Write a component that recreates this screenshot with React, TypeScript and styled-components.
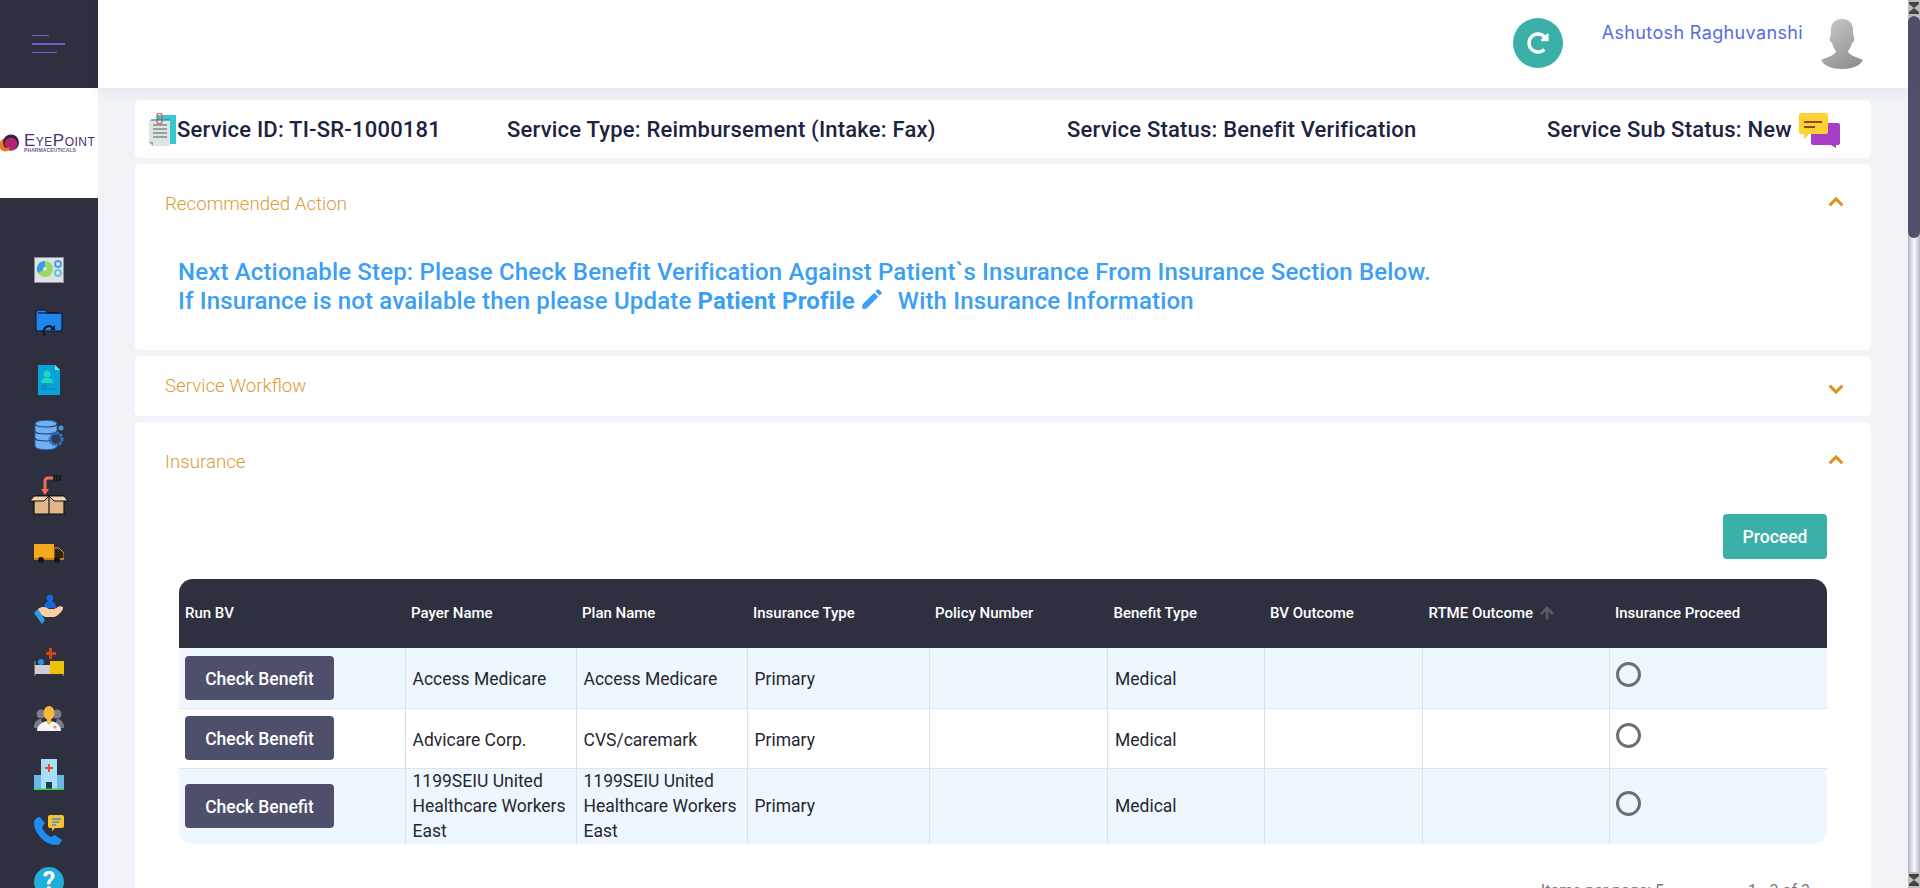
import React from "react";
import styled, { createGlobalStyle } from "styled-components";
import { FaRedoAlt } from "react-icons/fa";

const GlobalStyle = createGlobalStyle`
  html, body {
    margin: 0;
    height: 100%;
    overflow: hidden;
    font-family: Roboto, "Liberation Sans", sans-serif;
    background: #f1f3f9;
  }
`;

const Shell = styled.div`
  display: flex;
  height: 100vh;
  overflow: hidden;
`;

const Sidebar = styled.aside`
  width: 98px;
  flex: none;
  display: flex;
  flex-direction: column;
  overflow: hidden;
  background: #2e2f3f;
`;

const MenuToggle = styled.div`
  height: 88px;
  flex: none;
  display: flex;
  flex-direction: column;
  justify-content: center;
  gap: 7px;
  padding: 0 33px 0 32px;
`;

const MenuLine = styled.span<{ $width: number; $thick?: boolean }>`
  display: block;
  width: ${(p) => p.$width}px;
  height: ${(p) => (p.$thick ? 2 : 1)}px;
  background: #6c61cf;
`;

const LogoBox = styled.div`
  height: 110px;
  flex: none;
  background: #fff;
  display: flex;
  align-items: center;
  gap: 5px;
`;

const LogoText = styled.div`
  display: flex;
  flex-direction: column;
  color: #4b2f72;
  font-family: "Liberation Sans", sans-serif;
`;

const LogoName = styled.span`
  font-size: 17px;
  line-height: 13px;
  font-variant: small-caps;
  letter-spacing: 0.5px;
`;

const LogoSub = styled.span`
  font-size: 5px;
  line-height: 6px;
  font-weight: 700;
  letter-spacing: 0.1px;
  color: #6f5a92;
`;

const NavList = styled.nav`
  display: flex;
  flex-direction: column;
  padding-top: 44px;
`;

const NavItem = styled.div`
  height: 56px;
  flex: none;
  display: flex;
  align-items: center;
  justify-content: center;
`;

const HelpBadge = styled.span`
  width: 30px;
  height: 30px;
  margin-top: -9px;
  border-radius: 50%;
  background: #21aed8;
  color: #fff;
  font-size: 25px;
  font-weight: 700;
  line-height: 30px;
  text-align: center;
  flex: none;
`;

const Main = styled.main`
  flex: 1;
  min-width: 0;
  display: flex;
  flex-direction: column;
`;

const TopBar = styled.header`
  height: 88px;
  flex: none;
  background: #fff;
  display: flex;
  align-items: flex-start;
  justify-content: flex-end;
  box-shadow: 0 2px 14px rgba(40, 45, 80, 0.09);
  position: relative;
  padding-right: 45px;
`;

const RefreshButton = styled.button`
  width: 50px;
  height: 50px;
  margin-top: 18px;
  border: 0;
  border-radius: 50%;
  background: #3ab0a8;
  color: #fff;
  display: flex;
  align-items: center;
  justify-content: center;
  padding: 0;
`;

const UserName = styled.div`
  margin: 21px 18px 0 39px;
  font-family: Inter, Lato, sans-serif;
  font-size: 18px;
  line-height: 24px;
  letter-spacing: 0.36px;
  white-space: nowrap;
  color: #5a6be0;
`;

const AvatarBox = styled.div`
  margin-top: 19px;
  width: 42px;
  height: 50px;
`;

const Content = styled.div`
  flex: 1;
  min-height: 0;
  overflow: hidden;
  display: flex;
  flex-direction: column;
  gap: 6px;
  padding: 12px 37px 0;
`;

const Card = styled.section`
  flex: none;
  background: #fff;
  border-radius: 5px;
`;

const ServiceBar = styled(Card)`
  height: 58px;
  display: grid;
  grid-template-columns: 359px 560px 480px 1fr;
  align-items: center;
  padding-left: 13px;
  font-size: 22px;
  font-weight: 500;
  letter-spacing: 0.2px;
  color: #20233f;
`;

const ServiceCell = styled.div`
  display: flex;
  align-items: center;
  white-space: nowrap;
`;

const AccordionHead = styled.div<{ $height: number; $nudge?: number }>`
  height: ${(p) => p.$height}px;
  box-sizing: border-box;
  display: flex;
  align-items: center;
  justify-content: space-between;
  padding: 0 21px 0 30px;
  padding-top: ${(p) => (p.$nudge && p.$nudge > 0 ? p.$nudge : 0)}px;
  padding-bottom: ${(p) => (p.$nudge && p.$nudge < 0 ? -p.$nudge : 0)}px;
`;

const AccordionTitle = styled.h3`
  margin: 0;
  font-size: 18.7px;
  font-weight: 300;
  color: #dd9a38;
`;

const ChevronSvg = styled.svg<{ $up: boolean }>`
  fill: #d9951f;
  stroke: #d9951f;
  stroke-width: 0.8;
  transform: translateY(${(p) => (p.$up ? -2 : 3)}px);
`;

const ActionCard = styled(Card)`
  height: 186px;
`;

const ActionText = styled.div`
  padding-left: 43px;
  margin-top: 16px;
  font-size: 24px;
  font-weight: 500;
  letter-spacing: 0.16px;
  line-height: 29px;
  white-space: nowrap;
  color: #3ba0f5;
`;

const ActionLink = styled.span`
  font-weight: 700;
`;

const EditIcon = styled.svg`
  width: 26px;
  height: 26px;
  fill: #3ba0f5;
  vertical-align: 5px;
  margin: -8px 13px -8px 4px;
`;

const InsuranceBody = styled.div`
  padding: 0 44px;
`;

const ProceedRow = styled.div`
  display: flex;
  justify-content: flex-end;
  margin-top: 15px;
  margin-bottom: 20px;
`;

const ProceedButton = styled.button`
  width: 104px;
  height: 45px;
  border: 0;
  border-radius: 4px;
  background: #3ab0a8;
  color: #fff;
  font: 500 17.5px Roboto, sans-serif;
`;

const TableWrap = styled.div`
  border-radius: 14px;
  overflow: hidden;
`;

const Table = styled.table`
  width: 100%;
  table-layout: fixed;
  border-collapse: collapse;
`;

const Col = styled.col<{ $width: number }>`
  width: ${(p) => p.$width}px;
`;

const HeadCell = styled.th`
  height: 69px;
  box-sizing: border-box;
  padding: 0 6px 2px;
  background: #2e2f3f;
  color: #fff;
  font-size: 15px;
  font-weight: 500;
  text-align: left;
  white-space: nowrap;
`;

const SortIcon = styled.svg`
  width: 18px;
  height: 18px;
  fill: #5c5d64;
  stroke: #5c5d64;
  stroke-width: 1.6;
  vertical-align: -4px;
  margin-left: 5px;
`;

const Row = styled.tr<{ $tinted: boolean; $height: number }>`
  background: ${(p) => (p.$tinted ? "#eef7fe" : "#fff")};
  height: ${(p) => p.$height}px;
`;

const Cell = styled.td`
  padding: 0 6px 0 7px;
  border-left: 1px solid #d8e3e8;
  border-bottom: 1px solid #dfe5ea;
  font-size: 17.5px;
  line-height: 25px;
  color: #26272f;
  &:first-child {
    border-left: 0;
    padding-left: 6px;
  }
  tr:last-child & {
    border-bottom: 0;
  }
`;

const TextCell = styled(Cell)`
  padding-top: 4px;
  tr:last-child & {
    padding-top: 0;
  }
`;

const CheckButton = styled.button`
  width: 149px;
  height: 44px;
  display: block;
  border: 0;
  border-radius: 4px;
  background: #4e4f6b;
  color: #fff;
  padding: 2px 0 0;
  font: 500 17.5px Roboto, sans-serif;
`;

const Radio = styled.input`
  appearance: none;
  display: block;
  width: 25px;
  height: 25px;
  margin: -6px 0 0 -1px;
  border: 3px solid #6f6f72;
  border-radius: 50%;
  background: transparent;
`;

const Paginator = styled.div`
  display: flex;
  justify-content: flex-end;
  gap: 84px;
  padding: 37px 17px 0 0;
  font-size: 16px;
  color: #77787f;
`;

const ScrollTrack = styled.div`
  width: 12px;
  flex: none;
  display: flex;
  flex-direction: column;
  background: linear-gradient(90deg, #b4b5c6, #f3f3f8 45%, #f3f3f8 60%, #b4b5c6);
`;

const ScrollButton = styled.div`
  height: 16px;
  flex: none;
  background: #bdbdbd;
  display: flex;
  align-items: center;
  justify-content: center;
`;

const ScrollThumb = styled.div`
  height: 222px;
  flex: none;
  background: #4f5069;
  border-radius: 6px;
`;

const ScrollSpace = styled.div`
  flex: 1;
`;

const Hourglass = () => (
  <svg width="10" height="12" viewBox="0 0 10 12">
    <path d="M0 0h10v2L5 6l5 4v2H0v-2l5-4-5-4z" fill="#444" />
  </svg>
);

const LogoMark = () => (
  <svg width="19" height="20" viewBox="0 0 19 20">
    <circle cx="6" cy="11.5" r="6.5" fill="#ef7a22" />
    <circle cx="11" cy="9.5" r="8" fill="#2c2347" />
    <circle cx="11" cy="11" r="6.5" fill="#b3236e" />
    <path d="M0 12c3 3 7 4 10 2l-2 4c-3 1-7 0-8-3z" fill="#ef7a22" />
  </svg>
);

const Avatar = () => (
  <svg width="42" height="50" viewBox="0 0 42 50">
    <defs>
      <linearGradient id="avatarFill" x1="0.2" y1="0" x2="0.8" y2="1">
        <stop offset="0" stopColor="#c6c6c6" />
        <stop offset="1" stopColor="#8e8e90" />
      </linearGradient>
    </defs>
    <path
      d="M21 0c7 0 11 4 11 11 0 3 0 5 1 7 1 2 0 5-2 6-1 4-3 7-4 8 0 3 5 5 15 9-3 6-11 9-21 9S3 47 0 41c10-4 15-6 15-9-1-1-3-4-4-8-2-1-3-4-2-6 1-2 1-4 1-7C10 4 14 0 21 0z"
      fill="url(#avatarFill)"
    />
  </svg>
);

const ClipboardIcon = () => (
  <svg width="29" height="33" viewBox="0 0 29 33">
    <rect x="9" y="2" width="19" height="29" fill="#38c8d0" />
    <path d="M1 7h21v26H5l-4-4z" fill="#dfe4e4" />
    <path d="M5 12h14M5 16h14M5 20h14M5 24h14" stroke="#7f8a8c" strokeWidth="1.4" />
    <path d="M1 29h4v4z" fill="#98a3a5" />
    <rect x="9" y="0" width="5" height="11" rx="2.5" fill="none" stroke="#e85b5b" strokeWidth="1.3" />
    <rect x="3" y="6" width="19" height="2" fill="#1b8f98" opacity="0.6" />
  </svg>
);

const ChatIcon = () => (
  <svg width="42" height="36" viewBox="0 0 42 36" style={{ marginLeft: 6, marginTop: 4 }}>
    <path d="M13 10h27a2 2 0 0 1 2 2v18a2 2 0 0 1-2 2h-2v3l-5-3H15a2 2 0 0 1-2-2z" fill="#a73dc7" />
    <path d="M3 0h25a2 2 0 0 1 2 2v17a2 2 0 0 1-2 2H11l-5 5v-5H3a2 2 0 0 1-2-2V2a2 2 0 0 1 2-2z" fill="#fdd033" />
    <path d="M6 9h18M6 14h11" stroke="#8a4b12" strokeWidth="2" />
  </svg>
);

const Chevron = ({ up }: { up: boolean }) => (
  <ChevronSvg $up={up} width="28" height="28" viewBox="0 0 24 24">
    <path d={up ? "M12 8l-6 6 1.41 1.41L12 10.83l4.59 4.58L18 14z" : "M16.59 8.59L12 13.17 7.41 8.59 6 10l6 6 6-6z"} />
  </ChevronSvg>
);

const navIcons = [
  <svg key="dash" width="30" height="26" viewBox="0 0 30 26">
    <rect x="0.5" y="0.5" width="29" height="25" fill="#dfe3e6" stroke="#8b9096" />
    <circle cx="11" cy="12" r="8" fill="#9bd860" />
    <path d="M11 12V4a8 8 0 0 0-7 12z" fill="#3d9bea" />
    <circle cx="11" cy="12" r="2" fill="#dfe3e6" />
    <circle cx="24" cy="7" r="3" fill="none" stroke="#4d9de8" strokeWidth="2" />
    <circle cx="24" cy="16" r="3" fill="none" stroke="#68c1ea" strokeWidth="2" />
  </svg>,
  <svg key="folder" width="28" height="30" viewBox="0 0 28 30" style={{ marginTop: -8 }}>
    <path d="M1 5a2 2 0 0 1 2-2h7l3 3h12a2 2 0 0 1 2 2v14a2 2 0 0 1-2 2H3a2 2 0 0 1-2-2z" fill="#1e86ee" stroke="#0e1420" strokeWidth="1" />
    <path d="M3 6h21" stroke="#0e1420" strokeWidth="1.2" />
    <path d="M10 29a6 6 0 0 1 4-10c2 0 3 1 4 2" fill="none" stroke="#12161f" strokeWidth="2" />
    <path d="M20 18v5h-5z" fill="#12161f" />
  </svg>,
  <svg key="doc" width="22" height="30" viewBox="0 0 22 30" style={{ marginTop: -4 }}>
    <path d="M0 0h17l5 5v25H0z" fill="#04a3dc" />
    <path d="M17 0l5 5h-5z" fill="#7be8d8" />
    <circle cx="9" cy="9" r="3.5" fill="#1fd8b0" />
    <path d="M3 18c0-4 3-5 6-5s6 1 6 5z" fill="#1fd8b0" />
    <path d="M3 21h6M3 24h16" stroke="#0a6fa8" strokeWidth="1" />
  </svg>,
  <svg key="db" width="30" height="30" viewBox="0 0 30 30" style={{ marginTop: -6 }}>
    <path d="M1 4c0-5 22-5 22 0v22c0 5-22 5-22 0z" fill="#6fb0f5" stroke="#2a5c9a" strokeWidth="1" />
    <path d="M1 4c0 4 22 4 22 0M1 11c0 4 22 4 22 0M1 18c0 4 22 4 22 0" fill="none" stroke="#1d3f70" strokeWidth="1.2" />
    <circle cx="22" cy="19" r="6" fill="#2e3a55" stroke="#2f78c4" strokeWidth="3" strokeDasharray="2.5 1" />
    <circle cx="27" cy="8" r="2.5" fill="#4c96dc" />
  </svg>,
  <svg key="box" width="38" height="41" viewBox="0 0 38 41">
    <path d="M4 22h30v18H4z" fill="#e3b68a" stroke="#111" strokeWidth="1.2" />
    <path d="M4 22L0 27h14l5-5zM34 22l4 5H24l-5-5z" fill="#f2d2ad" stroke="#111" strokeWidth="1" />
    <path d="M19 22v18" stroke="#111" strokeWidth="1.2" />
    <path d="M15 16V7a3 3 0 0 1 3-3h6" fill="none" stroke="#f26b5b" strokeWidth="3" />
    <path d="M11 15h8l-4 6z" fill="#f26b5b" />
    <path d="M24 1v6M27 1v6M30 1v6" stroke="#111" strokeWidth="1.4" />
  </svg>,
  <svg key="truck" width="30" height="22" viewBox="0 0 30 22" style={{ marginTop: 5 }}>
    <rect x="0" y="2" width="20" height="14" fill="#f6a81d" />
    <path d="M20 6h5l5 5v6H20z" fill="#2d2214" stroke="#e89a14" strokeWidth="1" />
    <rect x="0" y="16" width="30" height="2" fill="#c77f10" />
    <circle cx="7" cy="18" r="3" fill="#14141a" />
    <circle cx="23" cy="18" r="3" fill="#14141a" />
  </svg>,
  <svg key="hand" width="30" height="30" viewBox="0 0 30 30" style={{ marginTop: 5 }}>
    <circle cx="16" cy="4" r="3.5" fill="#1469d8" />
    <path d="M10 14c0-5 3-7 6-7s6 2 6 7z" fill="#1469d8" />
    <path d="M4 15c4-3 8-2 11 0h5l6-3 3 1c1 3-5 9-9 10H11l-5-3z" fill="#f8cfa0" />
    <path d="M0 19l4-4 7 11-3 4z" fill="#2a9de8" />
  </svg>,
  <svg key="bed" width="30" height="28" viewBox="0 0 30 28">
    <path d="M16 5h3V1h3v4h4v3h-4v4h-3V8h-3z" transform="translate(-4 -1)" fill="#d8401a" />
    <rect x="0" y="13" width="1.5" height="15" fill="#777" />
    <rect x="28.5" y="20" width="1.5" height="8" fill="#777" />
    <rect x="1" y="17" width="15" height="9" fill="#cfcfd2" />
    <rect x="16" y="13" width="14" height="13" fill="#edc200" />
    <circle cx="7" cy="14" r="3" fill="#2a8fe0" />
  </svg>,
  <svg key="people" width="30" height="26" viewBox="0 0 30 26">
    <circle cx="7" cy="9" r="4.5" fill="#7b7e88" />
    <circle cx="23" cy="9" r="4.5" fill="#7b7e88" />
    <path d="M0 23c0-7 4-9 7-9l3 9zM30 23c0-7-4-9-7-9l-3 9z" fill="#7b7e88" />
    <ellipse cx="15" cy="8" rx="5.5" ry="7" fill="#f6b93e" />
    <path d="M3 26c0-7 7-10 12-10s12 3 12 10z" fill="#f5f5f5" />
    <path d="M13 13h4v5l-2 2-2-2z" fill="#f6b93e" />
    <circle cx="21" cy="22" r="1.5" fill="#ef8a7a" />
  </svg>,
  <svg key="hospital" width="30" height="31" viewBox="0 0 30 31">
    <rect x="0" y="16" width="30" height="14" fill="#6db6e8" />
    <rect x="7" y="0" width="16" height="30" fill="#a7def7" />
    <path d="M14 5h2v3h3v2h-3v3h-2v-3h-3V8h3z" fill="#e2502c" />
    <path d="M12 23h6v7h-6z" fill="#1c3d4a" />
    <rect x="0" y="29.5" width="30" height="1.5" fill="#3fd03f" />
  </svg>,
  <svg key="phone" width="30" height="30" viewBox="0 0 30 30">
    <path d="M6 2l5 6-3 4c1 4 5 8 9 10l4-2 7 5c-1 3-3 5-6 5C11 30 0 18 0 8c0-3 3-6 6-6z" fill="#1e8cf0" />
    <path d="M16 0h12a2 2 0 0 1 2 2v9a2 2 0 0 1-2 2h-7l-3 3v-3h-2a2 2 0 0 1-2-2V2a2 2 0 0 1 2-2z" fill="#f8c22e" />
    <path d="M18 4h9M18 7h7M18 10h4" stroke="#3d8ed8" strokeWidth="1.4" />
  </svg>,
];

const columns = [226, 171, 171, 182, 178.5, 156.5, 158.5, 186.5, 218];

const rows = [
  { payer: "Access Medicare", plan: "Access Medicare", height: 60 },
  { payer: "Advicare Corp.", plan: "CVS/caremark", height: 60 },
  { payer: "1199SEIU United Healthcare Workers East", plan: "1199SEIU United Healthcare Workers East", height: 75 },
];

const App: React.FunctionComponent = () => (
  <Shell>
    <GlobalStyle />
    <Sidebar>
      <MenuToggle>
        <MenuLine $width={17} />
        <MenuLine $width={33} $thick />
        <MenuLine $width={25} />
      </MenuToggle>
      <LogoBox>
        <LogoMark />
        <LogoText>
          <LogoName>EyePoint</LogoName>
          <LogoSub>PHARMACEUTICALS</LogoSub>
        </LogoText>
      </LogoBox>
      <NavList>
        {navIcons.map((icon) => (
          <NavItem key={icon.key}>{icon}</NavItem>
        ))}
        <NavItem>
          <HelpBadge>?</HelpBadge>
        </NavItem>
      </NavList>
    </Sidebar>
    <Main>
      <TopBar>
        <RefreshButton>
          <FaRedoAlt size={22} />
        </RefreshButton>
        <UserName>Ashutosh Raghuvanshi</UserName>
        <AvatarBox>
          <Avatar />
        </AvatarBox>
      </TopBar>
      <Content>
        <ServiceBar>
          <ServiceCell>
            <ClipboardIcon />
            Service ID: TI-SR-1000181
          </ServiceCell>
          <ServiceCell>Service Type: Reimbursement (Intake: Fax)</ServiceCell>
          <ServiceCell>Service Status: Benefit Verification</ServiceCell>
          <ServiceCell>
            Service Sub Status: New
            <ChatIcon />
          </ServiceCell>
        </ServiceBar>
        <ActionCard>
          <AccordionHead $height={78} $nudge={2}>
            <AccordionTitle>Recommended Action</AccordionTitle>
            <Chevron up />
          </AccordionHead>
          <ActionText>
            Next Actionable Step: Please Check Benefit Verification Against Patient`s Insurance From Insurance Section Below.
            <br />
            If Insurance is not available then please Update <ActionLink>Patient Profile</ActionLink>
            <EditIcon viewBox="0 0 24 24">
              <path d="M3 17.25V21h3.75L17.81 9.94l-3.75-3.75L3 17.25zM20.71 7.04a1 1 0 0 0 0-1.41l-2.34-2.34a1 1 0 0 0-1.41 0l-1.83 1.83 3.75 3.75 1.83-1.83z" />
            </EditIcon>
            With Insurance Information
          </ActionText>
        </ActionCard>
        <Card>
          <AccordionHead $height={60} $nudge={-1}>
            <AccordionTitle>Service Workflow</AccordionTitle>
            <Chevron up={false} />
          </AccordionHead>
        </Card>
        <Card>
          <AccordionHead $height={77} $nudge={2}>
            <AccordionTitle>Insurance</AccordionTitle>
            <Chevron up />
          </AccordionHead>
          <InsuranceBody>
            <ProceedRow>
              <ProceedButton>Proceed</ProceedButton>
            </ProceedRow>
            <TableWrap>
              <Table>
                <colgroup>
                  {columns.map((width, i) => (
                    <Col key={i} $width={width} />
                  ))}
                </colgroup>
                <thead>
                  <tr>
                    <HeadCell>Run BV</HeadCell>
                    <HeadCell>Payer Name</HeadCell>
                    <HeadCell>Plan Name</HeadCell>
                    <HeadCell>Insurance Type</HeadCell>
                    <HeadCell>Policy Number</HeadCell>
                    <HeadCell>Benefit Type</HeadCell>
                    <HeadCell>BV Outcome</HeadCell>
                    <HeadCell>
                      RTME Outcome
                      <SortIcon viewBox="0 0 24 24">
                        <path d="M4 12l1.41 1.41L11 7.83V20h2V7.83l5.58 5.59L20 12l-8-8-8 8z" />
                      </SortIcon>
                    </HeadCell>
                    <HeadCell>Insurance Proceed</HeadCell>
                  </tr>
                </thead>
                <tbody>
                  {rows.map((row, i) => (
                    <Row key={i} $tinted={i % 2 === 0} $height={row.height}>
                      <Cell>
                        <CheckButton>Check Benefit</CheckButton>
                      </Cell>
                      <TextCell>{row.payer}</TextCell>
                      <TextCell>{row.plan}</TextCell>
                      <TextCell>Primary</TextCell>
                      <Cell />
                      <TextCell>Medical</TextCell>
                      <Cell />
                      <Cell />
                      <Cell>
                        <Radio type="radio" name="proceed" />
                      </Cell>
                    </Row>
                  ))}
                </tbody>
              </Table>
            </TableWrap>
            <Paginator>
              <span>Items per page: 5</span>
              <span>1 - 3 of 3</span>
            </Paginator>
          </InsuranceBody>
        </Card>
      </Content>
    </Main>
    <ScrollTrack>
      <ScrollButton>
        <Hourglass />
      </ScrollButton>
      <ScrollThumb />
      <ScrollSpace />
      <ScrollButton>
        <Hourglass />
      </ScrollButton>
    </ScrollTrack>
  </Shell>
);

export default App;
